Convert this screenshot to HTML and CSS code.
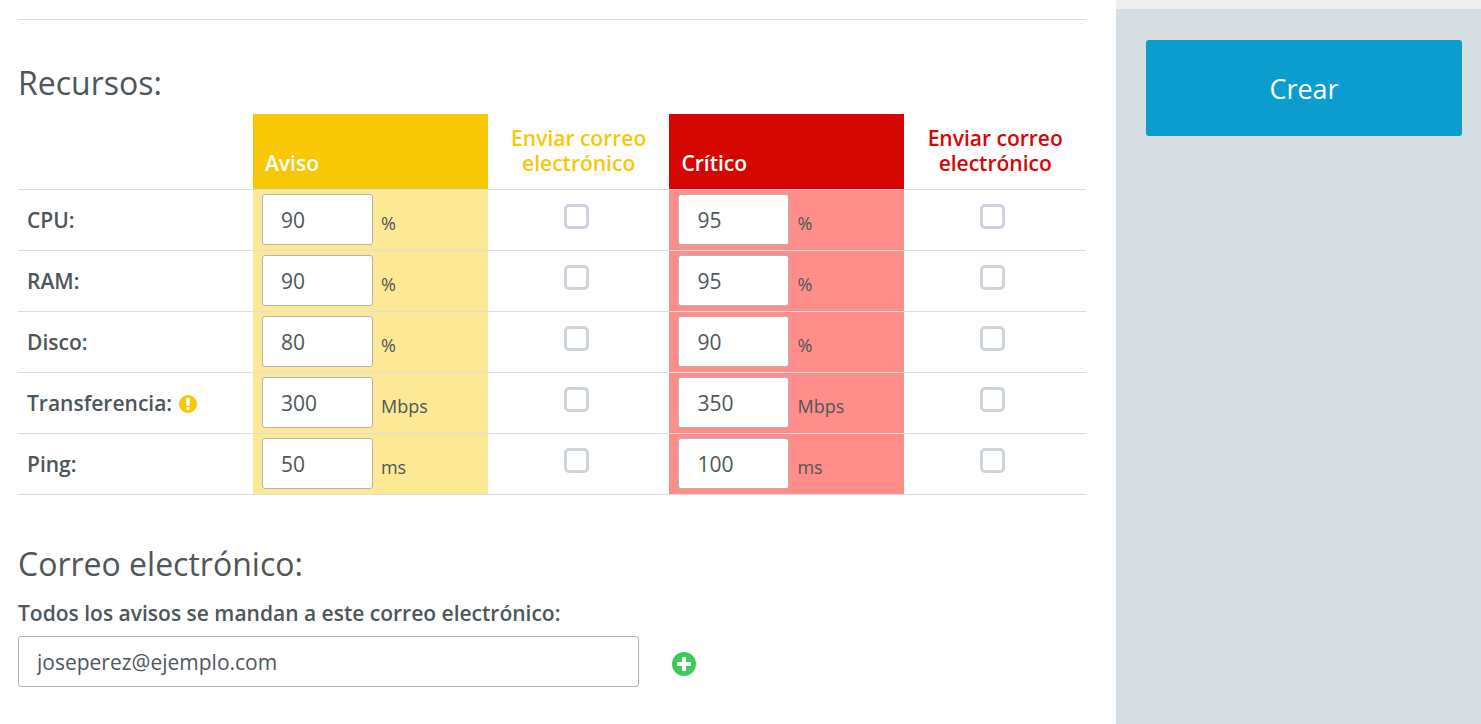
FILE: index.html
```html
<!DOCTYPE html>
<html lang="es">
<head>
    <meta charset="UTF-8">
    <meta name="viewport" content="width=device-width, initial-scale=1.0">
    <title>Crear política de monitorización</title>
    <link rel="stylesheet" href="styles.css">
</head>
<body>
    <form class="page" action="#" method="POST">
        <main class="content">
            <!-- Recursos -->
            <section class="section resources">
                <h2>Recursos:</h2>
                <table class="limits">
                    <thead>
                        <tr>
                            <td class="col-name"></td>
                            <th class="col-limit warning-head" scope="col">Aviso</th>
                            <th class="col-mail warning-mail" scope="col">Enviar correo electrónico</th>
                            <th class="col-limit critical-head" scope="col">Crítico</th>
                            <th class="col-mail critical-mail" scope="col">Enviar correo electrónico</th>
                        </tr>
                    </thead>
                    <tbody>
                        <tr>
                            <th scope="row">CPU:</th>
                            <td class="warning"><input type="text" id="cpu-w" value="90" aria-label="CPU, aviso"><label for="cpu-w">%</label></td>
                            <td class="mail"><input type="checkbox" aria-label="CPU, correo de aviso"></td>
                            <td class="critical"><input type="text" id="cpu-c" value="95" aria-label="CPU, crítico"><label for="cpu-c">%</label></td>
                            <td class="mail"><input type="checkbox" aria-label="CPU, correo crítico"></td>
                        </tr>
                        <tr>
                            <th scope="row">RAM:</th>
                            <td class="warning"><input type="text" id="ram-w" value="90" aria-label="RAM, aviso"><label for="ram-w">%</label></td>
                            <td class="mail"><input type="checkbox" aria-label="RAM, correo de aviso"></td>
                            <td class="critical"><input type="text" id="ram-c" value="95" aria-label="RAM, crítico"><label for="ram-c">%</label></td>
                            <td class="mail"><input type="checkbox" aria-label="RAM, correo crítico"></td>
                        </tr>
                        <tr>
                            <th scope="row">Disco:</th>
                            <td class="warning"><input type="text" id="disk-w" value="80" aria-label="Disco, aviso"><label for="disk-w">%</label></td>
                            <td class="mail"><input type="checkbox" aria-label="Disco, correo de aviso"></td>
                            <td class="critical"><input type="text" id="disk-c" value="90" aria-label="Disco, crítico"><label for="disk-c">%</label></td>
                            <td class="mail"><input type="checkbox" aria-label="Disco, correo crítico"></td>
                        </tr>
                        <tr>
                            <th scope="row">Transferencia:
                                <svg class="info-icon" viewBox="0 0 18 18" aria-hidden="true">
                                    <circle cx="9" cy="9" r="9" fill="#f8c706"/>
                                    <path d="M7 3h4l-.5 8h-3z" fill="#fff"/>
                                    <rect x="7.400" y="12" width="3.200" height="3" rx=".4" fill="#fff"/>
                                </svg>
                            </th>
                            <td class="warning"><input type="text" id="net-w" value="300" aria-label="Transferencia, aviso"><label for="net-w">Mbps</label></td>
                            <td class="mail"><input type="checkbox" aria-label="Transferencia, correo de aviso"></td>
                            <td class="critical"><input type="text" id="net-c" value="350" aria-label="Transferencia, crítico"><label for="net-c">Mbps</label></td>
                            <td class="mail"><input type="checkbox" aria-label="Transferencia, correo crítico"></td>
                        </tr>
                        <tr>
                            <th scope="row">Ping:</th>
                            <td class="warning"><input type="text" id="ping-w" value="50" aria-label="Ping, aviso"><label for="ping-w">ms</label></td>
                            <td class="mail"><input type="checkbox" aria-label="Ping, correo de aviso"></td>
                            <td class="critical"><input type="text" id="ping-c" value="100" aria-label="Ping, crítico"><label for="ping-c">ms</label></td>
                            <td class="mail"><input type="checkbox" aria-label="Ping, correo crítico"></td>
                        </tr>
                    </tbody>
                </table>
            </section>

            <!-- Correo electrónico -->
            <section class="section">
                <h2>Correo electrónico:</h2>
                <label class="email-label" for="email">Todos los avisos se mandan a este correo electrónico:</label>
                <div class="email-row">
                    <input type="email" id="email" name="email" value="joseperez@ejemplo.com">
                    <button type="button" class="add-button" aria-label="Añadir correo">
                        <svg viewBox="0 0 24 24" aria-hidden="true">
                            <circle cx="12" cy="12" r="12" fill="#3bcb5a"/>
                            <path d="M10 5h4v5h5v4h-5v5h-4v-5H5v-4h5z" fill="#fff"/>
                        </svg>
                    </button>
                </div>
            </section>
        </main>

        <aside class="sidebar">
            <button type="submit" class="create-button">Crear</button>
        </aside>
    </form>
</body>
</html>
```

FILE: styles.css
```css
* {
    box-sizing: border-box;
}

body {
    margin: 0;
    font-family: "Open Sans", "Noto Sans", sans-serif;
    font-size: 21px;
    line-height: 25px;
    color: #4e565a;
    background-color: #fff;
}

input,
button {
    font: inherit;
    color: inherit;
}

.page {
    display: flex;
    min-height: 100vh;
}

.content {
    flex: 1;
    padding: 19px 30px 0 18px;
}

.section {
    margin-bottom: 46px;
}

.resources {
    padding-top: 40px;
    border-top: 1px solid #ddd;
}

h2 {
    margin: 0;
    padding-bottom: 8px;
    font-size: 32px;
    font-weight: 400;
    line-height: 46px;
}

/* tabla de límites */
.limits {
    width: 100%;
    table-layout: fixed;
    border-collapse: separate;
    border-spacing: 0;
}

.limits th {
    font-weight: 600;
    text-align: left;
}

.limits th,
.limits td {
    border-bottom: 1px solid #ddd;
}

.limits thead th {
    padding: 12px 12px 13px;
    vertical-align: bottom;
}

.col-name,
.col-limit {
    width: 22%;
}

.col-mail {
    width: 17%;
}

.limits .warning-head {
    color: #fff;
    background-color: #f8c706;
}

.limits .critical-head {
    color: #fff;
    background-color: #d60602;
}

.limits .warning-mail,
.limits .critical-mail {
    text-align: center;
}

.limits .warning-mail {
    color: #f8c706;
}

.limits .critical-mail {
    color: #d60602;
}

.limits tbody th {
    padding: 0 9px;
}

.limits tbody td {
    height: 61px;
    padding: 4px 9px 5px;
}

.warning {
    background-color: #fde995;
}

.critical {
    background-color: #ff8e8a;
}

.warning input,
.critical input {
    vertical-align: middle;
}

.warning label,
.critical label {
    display: inline-block;
    margin-left: 8px;
    padding-top: 8px;
    font-size: 18px;
    vertical-align: middle;
}

.limits .mail {
    padding-right: 14px;
    text-align: center;
}

.info-icon {
    width: 18px;
    height: 18px;
    margin-left: 1px;
    vertical-align: -2px;
}

input[type="text"],
input[type="email"] {
    height: 51px;
    padding: 0 18px;
    border: 1px solid #b2b5b8;
    border-radius: 3px;
    background-color: #fff;
}

input[type="text"] {
    width: 111px;
}

input[type="checkbox"] {
    appearance: none;
    width: 25px;
    height: 25px;
    margin: 0 0 7px;
    border: 3px solid #cdd4df;
    border-radius: 5px;
    background-color: #fff;
    vertical-align: middle;
}

input[type="checkbox"]:checked {
    background-color: #0c9dcf;
}

/* correo */
.email-label {
    display: block;
    margin-top: 6px;
    margin-bottom: 10px;
    font-weight: 600;
}

.email-row {
    display: flex;
    align-items: center;
    gap: 33px;
}

input[type="email"] {
    width: 621px;
    max-width: 90%;
}

.add-button {
    width: 24px;
    height: 24px;
    margin-top: 5px;
    padding: 0;
    border: 0;
    background: none;
    cursor: pointer;
}

.add-button svg {
    display: block;
}

.sidebar {
    width: 365px;
    padding: 31px 19px 0 30px;
    border-top: 9px solid #efefef;
    background-color: #d6dde3;
}

.create-button {
    width: 100%;
    height: 96px;
    border: 0;
    border-radius: 3px;
    font-size: 27px;
    color: #fff;
    background-color: #0c9dcf;
    cursor: pointer;
}
```
